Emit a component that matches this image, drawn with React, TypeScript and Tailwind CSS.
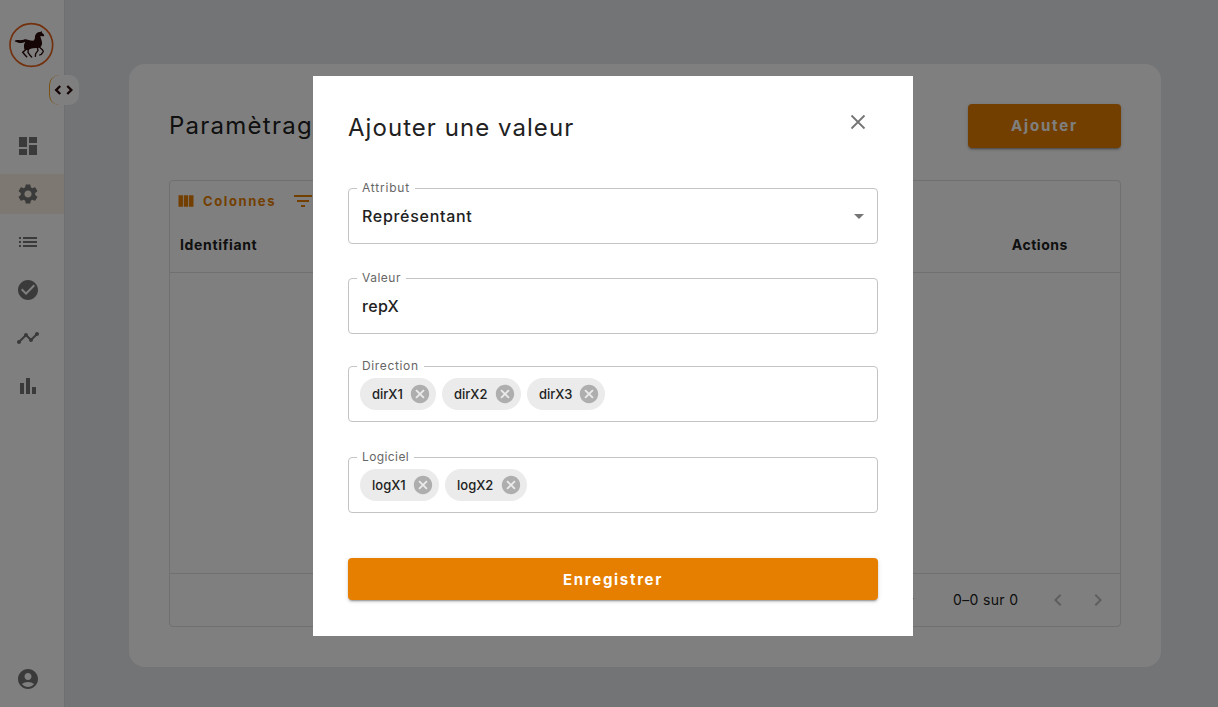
import type { ReactNode } from "react";
import {
  MdArrowDropDown,
  MdCancel,
  MdCheckCircle,
  MdChevronLeft,
  MdChevronRight,
  MdDashboard,
  MdFilterList,
  MdList,
  MdSettings,
  MdTimeline,
} from "react-icons/md";

function HorseLogo() {
  return (
    <svg className="h-[46px] w-[46px]" viewBox="0 0 138 138">
      <circle cx="70" cy="69" r="64" fill="none" stroke="#e4601a" strokeWidth="5" />
      <g fill="#2a0a08">
        <path d="M20 56C28 51 36 58 50 52C56 50 62 56 76 56C80 55 81 49 81 43C82 35 89 29 97 30L101 27L102 32C107 36 110 39 108 42C105 44 101 41 97 42C98 50 103 57 102 66C101 73 97 77 90 78C80 79 72 77 65 82C58 88 49 84 48 74C47 67 50 63 52 59C42 65 31 63 25 60C22 59 20 58 20 56Z" />
      </g>
      <g fill="none" stroke="#2a0a08" strokeWidth="4" strokeLinecap="round" strokeLinejoin="round">
        <path d="M51 77L52 84L44 91L51 99L56 104" strokeWidth="4.5" />
        <path d="M61 81L60 91L66 100L71 105" />
        <path d="M94 75L103 83L106 88L100 97L95 99" />
        <path d="M88 76L90 86L83 95L82 103" />
      </g>
    </svg>
  );
}

function BarChart() {
  return (
    <svg className="h-6 w-6" viewBox="0 0 24 24" fill="currentColor">
      <path d="M4 9h4v11H4zM16 13h4v7h-4zM10 4h4v16h-4z" />
    </svg>
  );
}

function Account() {
  return (
    <svg className="h-6 w-6" viewBox="0 0 24 24" fill="currentColor">
      <path d="M12 2C6.48 2 2 6.48 2 12s4.48 10 10 10 10-4.48 10-10S17.52 2 12 2zm0 4c1.93 0 3.5 1.57 3.5 3.5S13.93 13 12 13s-3.5-1.57-3.5-3.5S10.07 6 12 6zm0 14c-2.03 0-4.43-.82-6.14-2.88C7.55 15.8 9.68 15 12 15s4.45.8 6.14 2.12C16.43 19.18 14.03 20 12 20z" />
    </svg>
  );
}

function NavItem({ active, children }: { active?: boolean; children: ReactNode }) {
  return (
    <a className={`flex h-10 items-center pl-4 ${active ? "bg-[#fbf0e3]" : ""}`}>{children}</a>
  );
}

function Sidebar() {
  return (
    <aside className="relative flex h-full w-[65px] shrink-0 flex-col border-r border-[#dcdee1] bg-white text-[#757575]">
      <div className="pl-[8px] pt-[22px]">
        <HorseLogo />
      </div>
      <div className="absolute left-[49px] top-[75px] flex h-[30px] w-[30px] items-center justify-center rounded-[10px] border-l border-[#f0a020] bg-white">
        <svg className="mr-px h-[10px] w-[20px]" viewBox="0 0 20 10" fill="none" stroke="#2a0a08" strokeWidth="2.4">
          <path d="M6.2 1L2.2 5L6.2 9M13.3 1L17.3 5L13.3 9" />
        </svg>
      </div>
      <nav className="mt-[58px] flex flex-col gap-2">
        <NavItem><MdDashboard className="h-6 w-6" /></NavItem>
        <NavItem active><MdSettings className="h-6 w-6" /></NavItem>
        <NavItem><MdList className="h-6 w-6" /></NavItem>
        <NavItem><MdCheckCircle className="h-6 w-6" /></NavItem>
        <NavItem><MdTimeline className="h-6 w-6" /></NavItem>
        <NavItem><BarChart /></NavItem>
      </nav>
      <div className="mb-4 mt-auto pl-4">
        <Account />
      </div>
    </aside>
  );
}

function TableCard() {
  return (
    <section className="flex h-[603px] w-[1032px] flex-col rounded-2xl bg-white p-10">
      <div className="flex h-11 items-center justify-between">
        <h1 className="text-[24px] tracking-[1.25px]">Paramètrage</h1>
        <button className="h-11 w-[153px] rounded bg-[#e67e00] pt-px text-[15px] font-bold tracking-[1.8px] text-white shadow-[0_3px_1px_-2px_rgba(0,0,0,0.2),0_2px_2px_0_rgba(0,0,0,0.14),0_1px_5px_0_rgba(0,0,0,0.12)]">
          Ajouter
        </button>
      </div>
      <div className="mt-8 flex h-[447px] flex-col rounded border border-[#e0e0e0]">
        <div className="flex h-10 items-center pl-[6px] text-[#e67e00]">
          <svg className="h-5 w-5" viewBox="0 0 24 24" fill="currentColor">
            <path d="M14.67 5v14H9.33V5h5.34zm1 14H21V5h-5.33v14zm-7.34 0V5H3v14h5.33z" />
          </svg>
          <span className="ml-[7px] w-[88px] pt-[2px] text-[13px] font-bold tracking-[1.6px]">Colonnes</span>
          <MdFilterList className="h-6 w-6" />
        </div>
        <div className="flex h-[52px] items-center justify-between border-b border-[#e0e0e0] pb-[5px] pl-[10px] pr-[52px] text-[14px] font-bold">
          <span className="tracking-[0.65px]">Identifiant</span>
          <span className="tracking-[0.55px]">Actions</span>
        </div>
        <div className="flex-1" />
        <div className="flex h-[53px] items-center justify-end border-t border-[#e0e0e0] pr-[10px] text-[14px]">
          <MdArrowDropDown className="mr-8 h-6 w-6 text-[#757575]" />
          <span className="mr-7 w-[65px] whitespace-nowrap pb-[2px] tracking-[0.35px]">0–0 sur 0</span>
          <MdChevronLeft className="h-6 w-6 text-[#bdbdbd]" />
          <MdChevronRight className="ml-4 h-6 w-6 text-[#bdbdbd]" />
        </div>
      </div>
    </section>
  );
}

function Field({ label, labelClass, className, children }: { label: string; labelClass: string; className: string; children: ReactNode }) {
  return (
    <div className={`relative flex h-14 items-center rounded border border-[#c4c4c4] ${className}`}>
      <label className={`absolute left-[8px] top-[-9px] whitespace-nowrap bg-white pl-[5px] text-[12px] leading-4 text-[#666] ${labelClass}`}>
        {label}
      </label>
      {children}
    </div>
  );
}

function Chip({ text, className }: { text: string; className: string }) {
  return (
    <span className={`flex h-8 items-center justify-between rounded-full bg-[#ebebeb] pl-3 pr-[5px] text-[13px] font-medium ${className}`}>
      <span className="pt-[2px]">{text}</span>
      <MdCancel className="h-[22px] w-[22px] text-[#aeaeae]" />
    </span>
  );
}

function Dialog() {
  return (
    <div className="flex h-[560px] w-[600px] flex-col bg-white px-[35px] pt-[34px]">
      <div className="flex h-9 items-center justify-between">
        <h2 className="text-[24px] tracking-[1.05px]">Ajouter une valeur</h2>
        <svg className="mb-3 mr-3 h-4 w-4" viewBox="0 0 16 16" fill="none" stroke="#757575" strokeWidth="1.8">
          <path d="M1.5 1.5L14.5 14.5M14.5 1.5L1.5 14.5" />
        </svg>
      </div>
      <Field label="Attribut" labelClass="w-[58px] tracking-[0.8px]" className="mt-[42px] justify-between pl-[13px] pr-[6px]">
        <span className="text-[16px] font-medium tracking-[0.7px]">Représentant</span>
        <MdArrowDropDown className="h-6 w-6 text-[#757575]" />
      </Field>
      <Field label="Valeur" labelClass="w-[49px] tracking-[0.5px]" className="mt-[34px] pl-[13px]">
        <span className="text-[16px] font-medium tracking-[0.3px]">repX</span>
      </Field>
      <Field label="Direction" labelClass="w-[67px] tracking-[0.65px]" className="mt-8 gap-[6px] pl-[11px]">
        <Chip text="dirX1" className="w-[76px]" />
        <Chip text="dirX2" className="w-[79px]" />
        <Chip text="dirX3" className="w-[78px]" />
      </Field>
      <Field label="Logiciel" labelClass="w-[57px] tracking-[0.4px]" className="mt-[35px] gap-[6px] pl-[11px]">
        <Chip text="logX1" className="w-[79px]" />
        <Chip text="logX2" className="w-[82px]" />
      </Field>
      <button className="mt-[45px] h-[42px] rounded bg-[#e67e00] pt-[2px] text-[15px] font-bold tracking-[1.7px] text-white shadow-[0_3px_1px_-2px_rgba(0,0,0,0.2),0_2px_2px_0_rgba(0,0,0,0.14),0_1px_5px_0_rgba(0,0,0,0.12)]">
        Enregistrer
      </button>
    </div>
  );
}

export default function App() {
  return (
    <div className="relative flex h-[707px] w-[1218px] overflow-hidden bg-[#e7e9ed] font-['Inter',sans-serif] text-[#212121]">
      <Sidebar />
      <main className="flex-1 pl-16 pt-16">
        <TableCard />
      </main>
      <div className="absolute inset-0 bg-black/50 pl-[313px] pt-[76px]">
        <Dialog />
      </div>
    </div>
  );
}
